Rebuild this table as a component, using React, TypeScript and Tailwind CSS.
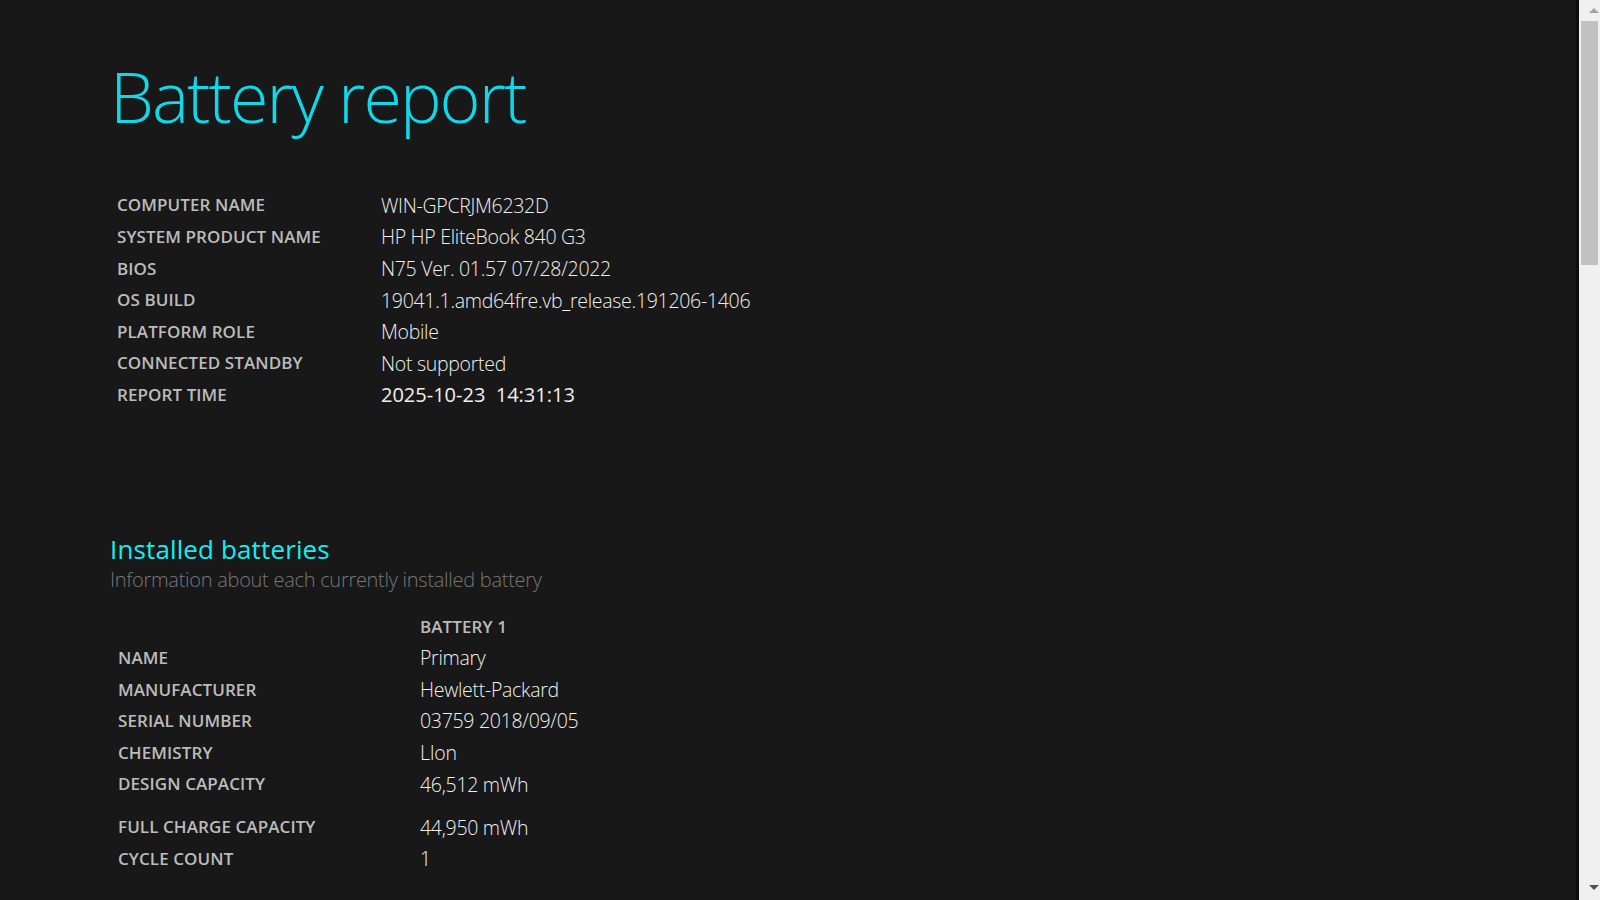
import React from "react";

const systemInfo: [string, string][] = [
  ["COMPUTER NAME", "WIN-GPCRJM6232D"],
  ["SYSTEM PRODUCT NAME", "HP HP EliteBook 840 G3"],
  ["BIOS", "N75 Ver. 01.57 07/28/2022"],
  ["OS BUILD", "19041.1.amd64fre.vb_release.191206-1406"],
  ["PLATFORM ROLE", "Mobile"],
  ["CONNECTED STANDBY", "Not supported"],
];

const batteryInfo: [string, string][] = [
  ["NAME", "Primary"],
  ["MANUFACTURER", "Hewlett-Packard"],
  ["SERIAL NUMBER", "03759 2018/09/05"],
  ["CHEMISTRY", "LIon"],
  ["DESIGN CAPACITY", "46,512 mWh"],
];

const batteryInfo2: [string, string][] = [
  ["FULL CHARGE CAPACITY", "44,950 mWh"],
  ["CYCLE COUNT", "1"],
];

const Label = ({ children }: { children: React.ReactNode }) => (
  <span className="text-[17px] font-semibold text-[#bcbcbc] tracking-[0.005em] leading-none">{children}</span>
);

const Row = ({ label, value, valueCol }: { label: string; value: React.ReactNode; valueCol: string }) => (
  <div className="flex items-center h-[31.6px]">
    <div className={`${valueCol} shrink-0`}>
      <Label>{label}</Label>
    </div>
    <div className="text-[19.5px] font-light text-[#f0f0f0] leading-none tracking-[-0.015em]">{value}</div>
  </div>
);

const Scrollbar = () => (
  <div className="flex h-full shrink-0">
    <div className="w-[3px] h-full bg-[#0e0e0e]" />
    <div className="relative w-[21px] h-full bg-[#f0f0f0]">
      <div className="absolute left-[10px] top-[8px] w-0 h-0 border-l-[5px] border-r-[5px] border-b-[5px] border-l-transparent border-r-transparent border-b-[#a3a3a3]" />
      <div className="absolute left-[2px] top-[21px] w-[17px] h-[244px] bg-[#c1c1c1]" />
      <div className="absolute left-[10px] top-[885px] w-0 h-0 border-l-[5px] border-r-[5px] border-t-[5px] border-l-transparent border-r-transparent border-t-[#505050]" />
    </div>
  </div>
);

const App = () => {
  return (
    <div className="flex w-full h-[900px] overflow-hidden bg-[#181818]" style={{ fontFamily: '"Open Sans", "Noto Sans", sans-serif' }}>
      <div className="flex-1 pl-[110px] pt-[61px]">
        <h1 className="text-[70px] font-light leading-none text-[#11d8e8] tracking-[-0.028em]">Battery report</h1>

        <div className="mt-[58.7px] pl-[7px]">
          {systemInfo.map(([l, v]) => (
            <Row key={l} label={l} value={v} valueCol="w-[264px]" />
          ))}
          <Row
            label="REPORT TIME"
            valueCol="w-[264px]"
            value={<span className="font-normal whitespace-pre text-[20px] tracking-normal">2025-10-23  14:31:13</span>}
          />
        </div>

        <h2 className="mt-[125px] text-[26px] leading-none text-[#11eef4] tracking-[0.005em]">Installed batteries</h2>
        <p className="mt-[8px] text-[20px] leading-none font-light text-[#777777] tracking-[-0.014em]">
          Information about each currently installed battery
        </p>

        <div className="mt-[20.7px] pl-[8px]">
          <div className="flex items-center h-[31.6px]">
            <div className="w-[302px] shrink-0" />
            <Label>BATTERY 1</Label>
          </div>
          {batteryInfo.map(([l, v]) => (
            <Row key={l} label={l} value={v} valueCol="w-[302px]" />
          ))}
          <div className="h-[11.5px]" />
          {batteryInfo2.map(([l, v]) => (
            <Row key={l} label={l} value={v} valueCol="w-[302px]" />
          ))}
        </div>
      </div>
      <Scrollbar />
    </div>
  );
};

export default App;
